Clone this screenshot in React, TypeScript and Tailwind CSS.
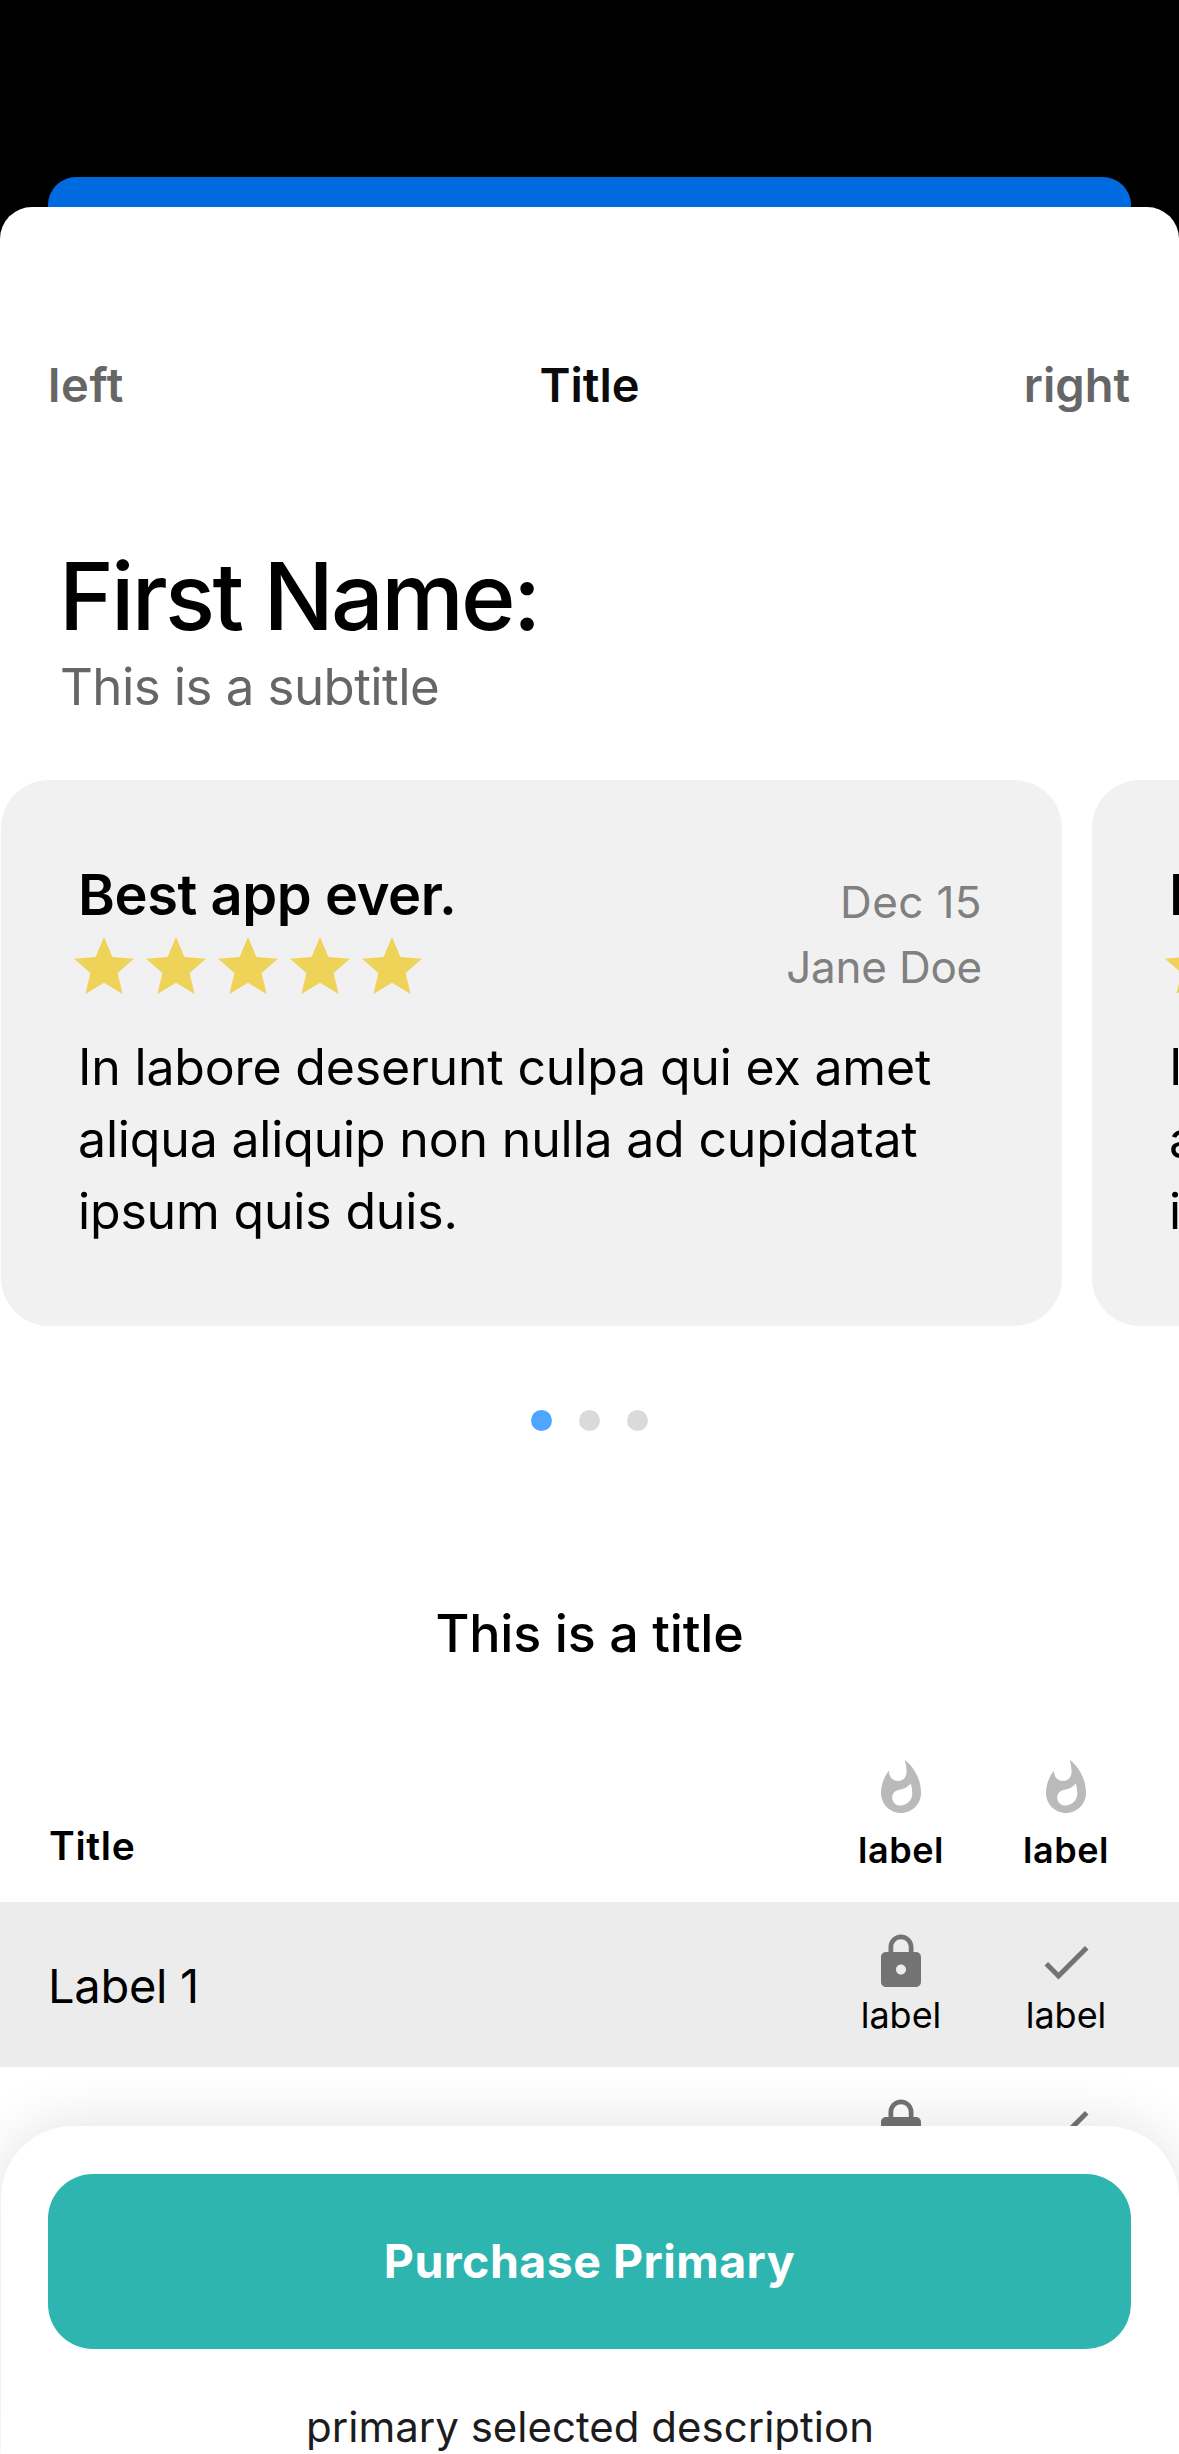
const columns = ['first', 'second'];

function Star() {
  return (
    <svg viewBox="0 0 24 24" className="size-[72px] shrink-0" fill="#efd358">
      <path d="M12 17.27 18.18 21l-1.64-7.03L22 9.24l-7.19-.61L12 2 9.19 8.63 2 9.24l5.46 4.73L5.82 21z" />
    </svg>
  );
}

function Flame() {
  return (
    <svg viewBox="0 0 24 24" className="size-[60px]" fill="#bababa">
      <path d="M13.5.67s.74 2.65.74 4.8c0 2.06-1.35 3.73-3.41 3.73-2.07 0-3.63-1.67-3.63-3.73l.03-.36C5.21 7.51 4 10.62 4 14c0 4.42 3.58 8 8 8s8-3.58 8-8C20 8.61 17.41 3.8 13.5.67zM11.71 19c-1.78 0-3.22-1.4-3.22-3.14 0-1.62 1.05-2.76 2.81-3.12 1.77-.36 3.6-1.21 4.62-2.58.39 1.29.59 2.65.59 4.04 0 2.65-2.15 4.8-4.8 4.8z" />
    </svg>
  );
}

function Lock() {
  return (
    <svg viewBox="0 0 24 24" className="size-[60px]" fill="#737373">
      <path d="M18 8h-1V6c0-2.76-2.24-5-5-5S7 3.24 7 6v2H6c-1.1 0-2 .9-2 2v10c0 1.1.9 2 2 2h12c1.1 0 2-.9 2-2V10c0-1.1-.9-2-2-2zm-6 9c-1.1 0-2-.9-2-2s.9-2 2-2 2 .9 2 2-.9 2-2 2zm3.1-9H8.9V6c0-1.71 1.39-3.1 3.1-3.1 1.71 0 3.1 1.39 3.1 3.1v2z" />
    </svg>
  );
}

function Check() {
  return (
    <svg viewBox="0 0 24 24" className="size-[60px]" fill="#737373">
      <path d="M9 16.17 4.83 12l-1.42 1.41L9 19 21 7l-1.41-1.41z" />
    </svg>
  );
}

function ReviewCard() {
  return (
    <article className="h-[546px] w-[1061px] shrink-0 rounded-[48px] bg-[#f1f1f1] pt-[81px] pr-[80px] pl-[77px]">
      <div className="flex justify-between">
        <div>
          <h2 className="text-[56px] leading-[68px] font-semibold tracking-[-0.42px]">Best app ever.</h2>
          <div className="mt-0.5 -ml-[10px] flex">
            {[1, 2, 3, 4, 5].map((n) => (
              <Star key={n} />
            ))}
          </div>
        </div>
        <div className="mt-[9px] text-right text-[44px] leading-[65px] text-[#808080]">
          <p className="tracking-[0.4px]">Dec 15</p>
          <p className="tracking-[-0.23px]">Jane Doe</p>
        </div>
      </div>
      <p className="mt-[28px] text-[50px] leading-[72px] tracking-[-0.17px] whitespace-nowrap">
        In labore deserunt culpa qui ex amet
        <br />
        aliqua aliquip non nulla ad cupidatat
        <br />
        ipsum quis duis.
      </p>
    </article>
  );
}

function FeatureRow({ label, shaded }: { label: string; shaded?: boolean }) {
  return (
    <div className={shaded ? 'flex h-[165px] bg-[#ececec] pr-[30.5px] pl-12' : 'flex h-[165px] pr-[30.5px] pl-12'}>
      <p className="mt-[54px] flex-1 text-[47px] leading-[60px] tracking-[-0.29px]">{label}</p>
      {[<Lock key="lock" />, <Check key="check" />].map((icon, i) => (
        <div key={i} className="flex w-[165px] flex-col items-center pt-[30px]">
          {icon}
          <span className="mt-px text-[36px] leading-[44px]">label</span>
        </div>
      ))}
    </div>
  );
}

export default function App() {
  return (
    <div className="relative flex h-[2454px] w-[1179px] flex-col overflow-hidden bg-black pt-[177px] font-['Inter',sans-serif] text-black">
      <div className="mx-12 h-[30px] shrink-0 rounded-t-[28px] bg-[#006ae0]" />

      <main className="flex flex-1 flex-col overflow-hidden rounded-t-[32px] bg-white pt-[148px]">
        <header className="grid shrink-0 grid-cols-3 pr-[49px] pl-[49px] text-[47px] leading-[60px] font-semibold">
          <span className="-ml-px tracking-[0.7px] text-[#666666]">left</span>
          <span className="text-center text-[#0b0b0b]">Title</span>
          <span className="text-right text-[#666666]">right</span>
        </header>

        <section className="mt-[125px] shrink-0 pl-[60px]">
          <h1 className="-ml-px text-[93px] leading-[112px] font-medium tracking-[-2.71px]">First Name:</h1>
          <p className="mt-[5px] text-[51px] leading-[60px] tracking-[-0.57px] text-[#666666]">This is a subtitle</p>
        </section>

        <section className="mt-[63px] flex shrink-0 gap-[30px] overflow-hidden pl-px">
          <ReviewCard />
          <ReviewCard />
        </section>

        <div className="mt-[84px] flex shrink-0 justify-center gap-[27px]">
          <span className="size-[21px] rounded-full bg-[#4da6ff]" />
          <span className="size-[21px] rounded-full bg-[#dadada]" />
          <span className="size-[21px] rounded-full bg-[#dadada]" />
        </div>

        <h2 className="mt-[171px] shrink-0 text-center text-[52px] leading-[64px] font-medium tracking-[-0.18px]">This is a title</h2>

        <section className="mt-[92px] shrink-0">
          <div className="flex h-[144px] pr-[30.5px] pl-[49px] font-semibold">
            <p className="mt-16 flex-1 text-[39px] leading-[48px] tracking-[0.67px]">Title</p>
            {columns.map((c) => (
              <div key={c} className="flex w-[165px] flex-col items-center">
                <Flame />
                <span className="mt-2.5 text-[36px] leading-[44px] tracking-[0.54px]">label</span>
              </div>
            ))}
          </div>
          <FeatureRow label="Label 1" shaded />
          <FeatureRow label="Label 2" />
        </section>
      </main>

      <footer className="absolute top-[2126px] right-0 bottom-0 left-px flex flex-col rounded-t-[72px] bg-white px-12 pt-12 text-center shadow-[0_0_60px_rgba(0,0,0,0.12)]">
        <button className="-ml-px h-[175px] shrink-0 rounded-[45px] bg-[#2fb5af] text-[46.5px] font-bold tracking-[0.46px] text-white">
          Purchase Primary
        </button>
        <p className="mt-[52px] text-[42px] leading-[52px] text-[#1c1c1e]">primary selected description</p>
      </footer>
    </div>
  );
}
